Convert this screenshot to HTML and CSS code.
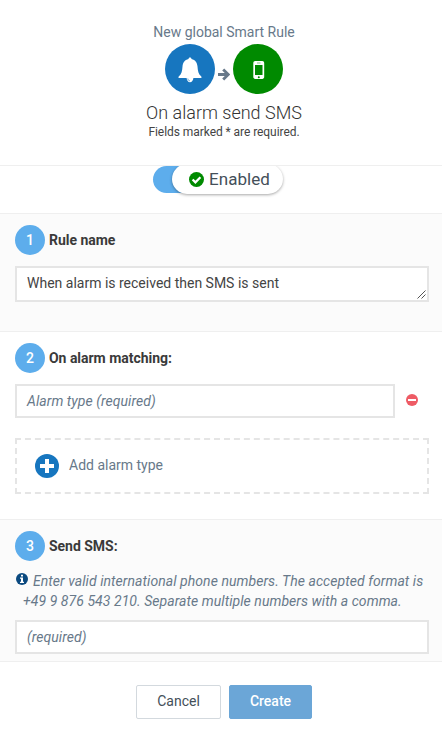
FILE: index.html
```html
<!DOCTYPE html>
<html lang="en">
<head>
<meta charset="utf-8">
<title>New global Smart Rule</title>
<link rel="stylesheet" href="styles.css">
</head>
<body>
<form class="dialog">
  <header class="head">
    <div class="kicker">New global Smart Rule</div>
    <div class="flow">
      <span class="disc disc-blue"><svg width="24" height="26" viewBox="0 0 24 26"><path fill="#fff" d="M12 .5c.9 0 1.500.6 1.500 1.600 3.900.9 5.800 4 6 7.400.3 4.500.9 7.500 3.600 9.700.9.800.5 1.900-.6 1.900H1.500c-1.100 0-1.500-1.100-.6-1.900 2.700-2.200 3.300-5.200 3.600-9.700.2-3.400 2.100-6.500 6-7.400 0-1 .6-1.600 1.500-1.600zM8.500 20.500h7c-.3 3.200-1.700 4.700-3.500 4.700s-3.200-1.500-3.500-4.700z"/><path d="M9.800 21.500c.1 1.400.9 2.300 2.200 2.300" fill="none" stroke="#1776bf" stroke-width=".6"/></svg></span>
      <svg class="arrow" width="12" height="13" viewBox="0 0 12 13"><path d="M0 6.500h10M5.200 1.400l5.100 5.100-5.100 5.100" fill="none" stroke="#68798a" stroke-width="2.800"/></svg>
      <span class="disc disc-green"><svg width="12" height="18" viewBox="0 0 12 18"><path fill="#fff" fill-rule="evenodd" d="M2.200 0h7.100c1.100 0 1.900.8 1.900 1.900v14.200c0 1.100-.8 1.900-1.900 1.900H2.200C1.100 18 .3 17.200.3 16.100V1.900C.3.800 1.100 0 2.200 0zM2 4v10h7.500V4zM4 1.700v.6h3.500v-.6zM5.800 15.200a1 1 0 100 2 1 1 0 000-2z"/></svg></span>
    </div>
    <h1 class="title">On alarm send SMS</h1>
    <div class="note">Fields marked * are required.</div>
  </header>
  <main class="body">
    <div class="toggle-row">
      <div class="switch"><div class="knob"><svg width="15" height="15" viewBox="0 0 15 15"><circle cx="7.500" cy="7.500" r="7.500" fill="#008a00"/><path d="M3.600 7.500l2.800 2.800 5-5" fill="none" stroke="#fff" stroke-width="2.300"/></svg><span>Enabled</span></div></div>
    </div>
    <section class="step shaded step-name">
      <div class="legend"><span class="num">1</span><b>Rule name</b></div>
      <div class="field area"><span>When alarm is received then SMS is sent</span><svg class="grip" width="9" height="9" viewBox="0 0 9 9"><path d="M.5 8.500l8-8M4.500 8.500l4-4" stroke="#555" stroke-width="1" fill="none"/></svg></div>
    </section>
    <section class="step step-alarm">
      <div class="legend"><span class="num">2</span><b>On alarm matching:</b></div>
      <div class="alarm-row">
        <div class="field hint">Alarm type (required)</div>
        <svg class="remove" width="12" height="12" viewBox="0 0 12 12"><circle cx="6" cy="6" r="6" fill="#ee5b65"/><path fill="#fff" d="M2 5h8v2H2z"/></svg>
      </div>
      <div class="add"><svg width="24" height="24" viewBox="0 0 24 24"><circle cx="12" cy="12" r="12" fill="#1776bf"/><path d="M12 5v14M5 12h14" stroke="#fff" stroke-width="4" stroke-linejoin="round"/></svg><span>Add alarm type</span></div>
    </section>
    <section class="step shaded step-sms">
      <div class="legend"><span class="num">3</span><b>Send SMS:</b></div>
      <div class="help"><svg class="info" width="12" height="12" viewBox="0 0 12 12"><circle cx="6" cy="6" r="6" fill="#0b4a80"/><path fill="#fff" d="M5 1.700h2v1.700H5zM4 4.500h3v4.300h1v1.200H4V8.800h1V5.700H4z"/></svg><span>Enter valid international phone numbers. The accepted format is +49 9 876 543 210. Separate multiple numbers with a comma.</span></div>
      <div class="field hint">(required)</div>
    </section>
  </main>
  <footer class="foot">
    <button type="button" class="btn">Cancel</button>
    <button type="button" class="btn primary">Create</button>
  </footer>
</form>
</body>
</html>
```

FILE: styles.css
```css
* { box-sizing: border-box; }
body { margin: 0; background: #fff; color: #444; font: 14px/20px Roboto, sans-serif; }
svg { display: block; flex: none; }
.dialog { width: 442px; height: 740px; display: flex; flex-direction: column; overflow: hidden; }
.head { height: 166px; padding: 22px 0 0 6px; border-bottom: 1px solid #efefef; display: flex; flex-direction: column; align-items: center; }
.kicker { color: #68798a; }
.flow { display: flex; align-items: center; gap: 3px; margin-top: 2px; }
.arrow { margin-top: 11px; }
.disc { width: 50px; height: 50px; border-radius: 50%; display: flex; align-items: center; justify-content: center; }
.disc-blue { background: #1776bf; }
.disc-blue svg { margin: 2px 1px 0 0; }
.disc-green { background: #008a00; }
.disc-green svg { margin: 2px 0 0 1px; }
.title { margin: 9px 0 0; font-size: 18px; line-height: 20px; font-weight: 300; color: #333; }
.note { margin-top: 1px; font-size: 12px; line-height: 17px; color: #444; letter-spacing: -.06px; }
.body { height: 496px; flex: none; border-bottom: 1px solid #efefef; overflow: hidden; }
.toggle-row { height: 47px; padding-left: 153px; overflow: hidden; }
.switch { display: flow-root; width: 100px; height: 27px; background: #5dadec; border-radius: 14px 0 0 14px; padding-left: 19px; }
.knob { width: 111px; height: 30px; margin-top: -2px; padding-left: 17px; background: #fff; border-radius: 15px; box-shadow: 0 1px 3px rgba(0,0,0,.35); display: flex; align-items: center; gap: 5px; font-size: 17px; color: #444f59; letter-spacing: .04px; }
.step { padding: 11px 13px 0 15px; border-top: 1px solid #efefef; }
.shaded { background: #fbfbfb; }
.step-name { height: 118px; }
.step-alarm { height: 188px; }
.step-sms { height: 143px; }
.legend { display: flex; align-items: center; gap: 4px; height: 30px; color: #3a3a3a; letter-spacing: -.03px; }
.legend b { font-weight: 700; }
.num { width: 30px; height: 30px; border-radius: 50%; background: #5dadec; color: #fff; font-weight: 500; text-align: center; line-height: 30px; }
.field { height: 34px; border: 2px solid #e5e5e5; background: #fff; padding: 5px 10px; color: #444; }
.hint { font-style: italic; color: #68798a; letter-spacing: .06px; }
.area { height: 36px; margin-top: 11px; display: flex; justify-content: space-between; padding-right: 1px; }
.grip { align-self: flex-end; margin-bottom: -4px; }
.alarm-row { display: flex; align-items: center; margin-top: 11px; }
.alarm-row .field { width: 380px; }
.remove { margin-left: 11px; margin-bottom: 2px; }
.add { height: 56px; margin-top: 20px; border: 2px dashed #e5e5e5; display: flex; align-items: center; gap: 10px; padding-left: 18px; color: #68798a; }
.add span { margin-top: -2px; }
.help { display: flex; margin: 10px 0 9px; font-style: italic; color: #68798a; letter-spacing: .06px; }
.info { margin: 2px -5px 0 1px; }
.help span { text-indent: 10px; }
.foot { display: flex; justify-content: center; gap: 8px; padding: 23px 0 0 6px; }
.btn { width: 85px; height: 34px; padding: 0 0 2px; border: 1px solid #d3d9de; border-radius: 2px; background: #fff; color: #444f59; font: 14px Roboto, sans-serif; }
.primary { width: 83px; border-color: #6ba6d7; background: #6ba6d7; color: #fff; font-weight: 500; }
```
